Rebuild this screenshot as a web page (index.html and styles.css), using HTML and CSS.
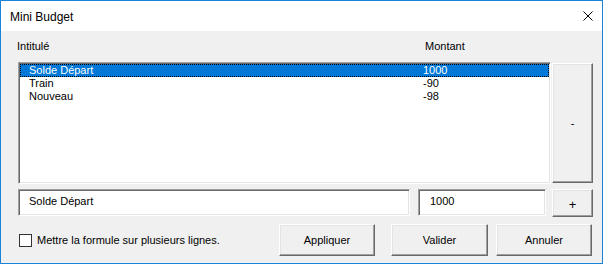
FILE: index.html
```html
<!DOCTYPE html>
<html lang="fr">
<head>
  <meta charset="UTF-8" />
  <meta name="viewport" content="width=device-width, initial-scale=1.0" />
  <title>Mini Budget</title>
  <link rel="stylesheet" href="styles.css">
</head>
<body>
  <div class="window">
    <div class="titlebar">
      <span class="title">Mini Budget</span>
      <svg class="close" width="10" height="10" viewBox="0 0 10 10">
        <path d="M0.5 0.5 L9.5 9.5 M9.5 0.5 L0.5 9.5" stroke="#000" stroke-width="1" fill="none" />
      </svg>
    </div>
    <div class="content">
      <div class="labels">
        <span>Intitulé</span>
        <span>Montant</span>
      </div>
      <div class="main-row">
        <div class="listbox">
          <div class="row selected"><span>Solde Départ</span><span>1000</span></div>
          <div class="row"><span>Train</span><span>-90</span></div>
          <div class="row"><span>Nouveau</span><span>-98</span></div>
        </div>
        <button class="btn btn-side btn-minus">-</button>
      </div>
      <div class="input-row">
        <div class="field field-name">Solde Départ</div>
        <div class="field field-amount">1000</div>
        <button class="btn btn-side btn-plus">+</button>
      </div>
      <div class="bottom-row">
        <label class="check">
          <span class="box"></span>
          Mettre la formule sur plusieurs lignes.
        </label>
        <button class="btn btn-action">Appliquer</button>
        <button class="btn btn-action btn-valider">Valider</button>
        <button class="btn btn-action btn-annuler">Annuler</button>
      </div>
    </div>
  </div>
</body>
</html>
```

FILE: styles.css
```css
body {
  margin: 0;
  font-family: "Liberation Sans", Arial, sans-serif;
  font-size: 11px;
  color: #000;
  background-color: #fff;
}

.window {
  width: 603px;
  height: 264px;
  box-sizing: border-box;
  border: 1px solid #1883d7;
  display: flex;
  flex-direction: column;
  background-color: #f0f0f0;
}

.titlebar {
  height: 30px;
  background-color: #fff;
  display: flex;
  align-items: center;
  justify-content: space-between;
  padding: 0 9px 0 9px;
}

.title {
  font-size: 12px;
  padding-top: 1px;
}

.close {
  margin-top: 0px;
}

.content {
  flex: 1;
  padding: 9px 9px 0 16px;
  display: flex;
  flex-direction: column;
}

.labels {
  display: grid;
  grid-template-columns: 408px 1fr;
  height: 13px;
  line-height: 13px;
  margin-bottom: 9px;
}

.main-row {
  display: flex;
  align-items: flex-start;
  margin-left: 1px;
}

.listbox,
.field {
  box-sizing: border-box;
  background-color: #fff;
  border: 1px solid;
  border-color: #a0a0a0 #fff #fff #a0a0a0;
  box-shadow: inset 1px 1px 0 #696969, inset -1px -1px 0 #e3e3e3;
}

.listbox {
  width: 533px;
  height: 122px;
  padding: 1px;
}

.row {
  display: grid;
  grid-template-columns: 394px 1fr;
  height: 13px;
  line-height: 13px;
  padding-left: 9px;
  box-sizing: border-box;
}

.row.selected {
  background-color: #0078d7;
  color: #fff;
  border: 1px dotted #000;
  padding-left: 8px;
  line-height: 11px;
}

.btn {
  box-sizing: border-box;
  font-family: inherit;
  font-size: 11px;
  color: #000;
  background-color: #f0f0f0;
  border: 1px solid;
  border-color: #fff #696969 #696969 #fff;
  box-shadow: inset -1px -1px 0 #a0a0a0, inset 1px 1px 0 #e3e3e3;
  padding: 0;
}

.btn-side {
  width: 41px;
  margin-left: auto;
}

.btn-minus {
  height: 120px;
  margin-top: 1px;
}

.input-row {
  display: flex;
  align-items: flex-start;
  margin-top: 5px;
  margin-left: 1px;
}

.field {
  height: 27px;
  padding: 5px 0 0 10px;
  line-height: 13px;
}

.field-name {
  width: 392px;
}

.field-amount {
  width: 128px;
  margin-left: 8px;
  padding-left: 11px;
}

.btn-plus {
  height: 28px;
  font-size: 13px;
  padding-top: 2px;
}

.bottom-row {
  display: flex;
  align-items: flex-start;
  margin-top: 7px;
  padding-left: 2px;
}

.check {
  flex: 1;
  display: flex;
  align-items: center;
  gap: 5px;
  margin-top: 10px;
  line-height: 13px;
}

.box {
  width: 13px;
  height: 13px;
  box-sizing: border-box;
  border: 1px solid #333;
  background-color: #fff;
}

.btn-action {
  width: 96px;
  height: 32px;
}

.btn-valider {
  width: 97px;
  margin-left: 16px;
}

.btn-annuler {
  margin-left: 8px;
  margin-right: 1px;
}
```
